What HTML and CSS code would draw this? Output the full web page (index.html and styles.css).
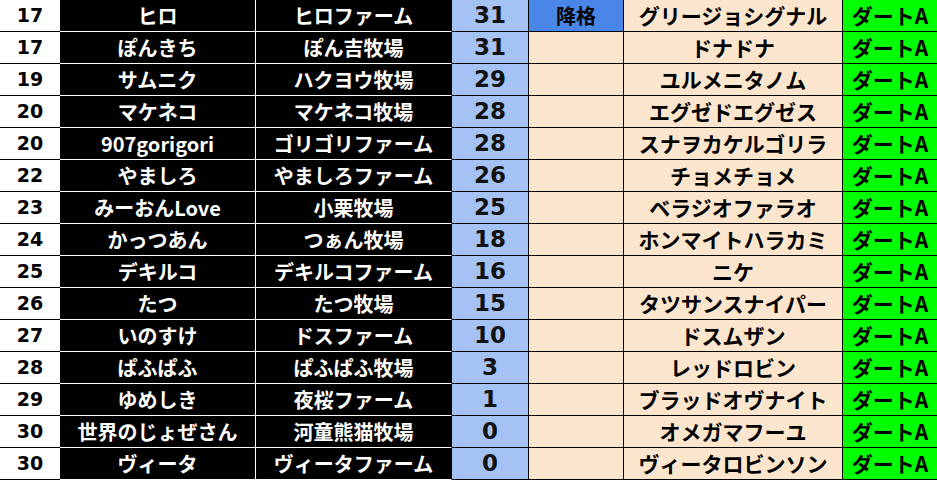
FILE: index.html
```html
<!DOCTYPE html>
<html lang="ja">
<head>
<meta charset="utf-8">
<title>ランキング</title>
<link rel="stylesheet" href="styles.css">
</head>
<body>
<div class="sheet">
  <div class="row"><div class="c rank">17</div><div class="c name">ヒロ</div><div class="c farm">ヒロファーム</div><div class="c pts">31</div><div class="c stat down">降格</div><div class="c horse">グリージョシグナル</div><div class="c cls">ダートA</div></div>
  <div class="row"><div class="c rank">17</div><div class="c name">ぽんきち</div><div class="c farm">ぽん吉牧場</div><div class="c pts">31</div><div class="c stat"></div><div class="c horse">ドナドナ</div><div class="c cls">ダートA</div></div>
  <div class="row"><div class="c rank">19</div><div class="c name">サムニク</div><div class="c farm">ハクヨウ牧場</div><div class="c pts">29</div><div class="c stat"></div><div class="c horse">ユルメニタノム</div><div class="c cls">ダートA</div></div>
  <div class="row"><div class="c rank">20</div><div class="c name">マケネコ</div><div class="c farm">マケネコ牧場</div><div class="c pts">28</div><div class="c stat"></div><div class="c horse">エグゼドエグゼス</div><div class="c cls">ダートA</div></div>
  <div class="row"><div class="c rank">20</div><div class="c name">907gorigori</div><div class="c farm">ゴリゴリファーム</div><div class="c pts">28</div><div class="c stat"></div><div class="c horse">スナヲカケルゴリラ</div><div class="c cls">ダートA</div></div>
  <div class="row"><div class="c rank">22</div><div class="c name">やましろ</div><div class="c farm">やましろファーム</div><div class="c pts">26</div><div class="c stat"></div><div class="c horse">チョメチョメ</div><div class="c cls">ダートA</div></div>
  <div class="row"><div class="c rank">23</div><div class="c name">みーおんLove</div><div class="c farm">小栗牧場</div><div class="c pts">25</div><div class="c stat"></div><div class="c horse">ベラジオファラオ</div><div class="c cls">ダートA</div></div>
  <div class="row"><div class="c rank">24</div><div class="c name">かっつあん</div><div class="c farm">つぁん牧場</div><div class="c pts">18</div><div class="c stat"></div><div class="c horse">ホンマイトハラカミ</div><div class="c cls">ダートA</div></div>
  <div class="row"><div class="c rank">25</div><div class="c name">デキルコ</div><div class="c farm">デキルコファーム</div><div class="c pts">16</div><div class="c stat"></div><div class="c horse">ニケ</div><div class="c cls">ダートA</div></div>
  <div class="row"><div class="c rank">26</div><div class="c name">たつ</div><div class="c farm">たつ牧場</div><div class="c pts">15</div><div class="c stat"></div><div class="c horse">タツサンスナイパー</div><div class="c cls">ダートA</div></div>
  <div class="row"><div class="c rank">27</div><div class="c name">いのすけ</div><div class="c farm">ドスファーム</div><div class="c pts">10</div><div class="c stat"></div><div class="c horse">ドスムザン</div><div class="c cls">ダートA</div></div>
  <div class="row"><div class="c rank">28</div><div class="c name">ぱふぱふ</div><div class="c farm">ぱふぱふ牧場</div><div class="c pts">3</div><div class="c stat"></div><div class="c horse">レッドロビン</div><div class="c cls">ダートA</div></div>
  <div class="row"><div class="c rank">29</div><div class="c name">ゆめしき</div><div class="c farm">夜桜ファーム</div><div class="c pts">1</div><div class="c stat"></div><div class="c horse">ブラッドオヴナイト</div><div class="c cls">ダートA</div></div>
  <div class="row"><div class="c rank">30</div><div class="c name">世界のじょぜさん</div><div class="c farm">河童熊猫牧場</div><div class="c pts">0</div><div class="c stat"></div><div class="c horse">オメガマフーユ</div><div class="c cls">ダートA</div></div>
  <div class="row"><div class="c rank">30</div><div class="c name">ヴィータ</div><div class="c farm">ヴィータファーム</div><div class="c pts">0</div><div class="c stat"></div><div class="c horse">ヴィータロビンソン</div><div class="c cls">ダートA</div></div>
</div>
</body>
</html>
```
FILE: styles.css
```css
* { box-sizing: border-box; }
html, body { margin: 0; padding: 0; background: #ffffff; }
.sheet {
  width: 937px;
  font-family: "Noto Sans CJK JP", sans-serif;
  font-weight: bold;
}
.row {
  display: grid;
  grid-template-columns: 60px 196px 196px 77px 95px 219px 94px;
  height: 32px;
}
.c {
  height: 32px;
  border-bottom: 1px solid #000;
  border-right: 1px solid #000;
  display: flex;
  align-items: center;
  justify-content: center;
  font-size: 20px;
  color: #000;
  white-space: nowrap;
  overflow: hidden;
  padding-bottom: 1px;
}
.rank {
  background: #fff;
  border-right: none;
  font-family: "DejaVu Sans", sans-serif;
  font-size: 19px;
}
.name, .farm {
  background: #000;
  color: #fff;
  border-bottom-color: #fff;
}
.name { border-right-color: #fff; }
.pts {
  background: #a4c2f4;
  font-family: "DejaVu Sans", sans-serif;
  font-size: 23px;
  font-weight: bold;
  color: #111;
}
.stat { background: #fce5cd; }
.stat.down { background: #4a86e8; }
.horse { background: #fce5cd; font-size: 21px; }
.cls { background: #00ff00; border-right: none; font-size: 21px; }
```
